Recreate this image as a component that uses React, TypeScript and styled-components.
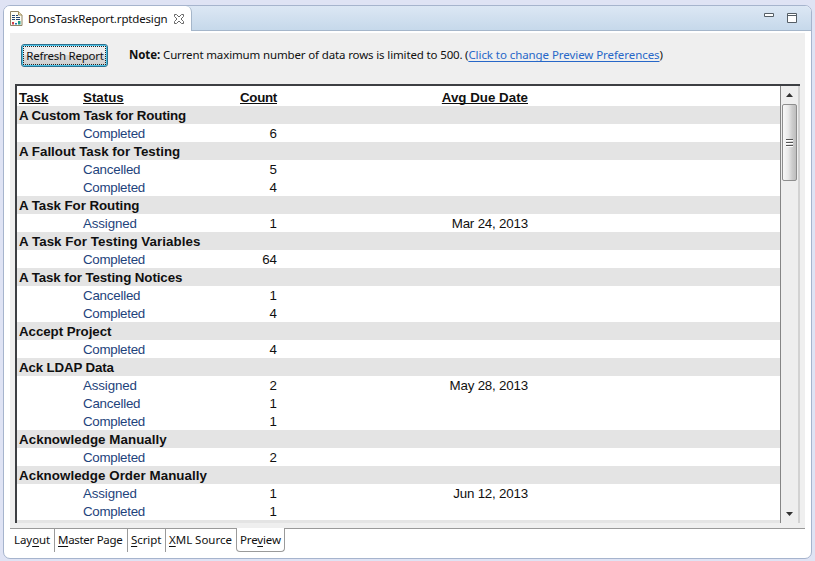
import React from "react";
import styled, { createGlobalStyle } from "styled-components";

const Global = createGlobalStyle`
  * { box-sizing: border-box; }
  html, body { margin: 0; height: 561px; overflow: hidden; background: #dfe3f4; }
`;

const Desktop = styled.div`
  width: 815px;
  height: 561px;
  padding: 5px 3px 2px;
  background: #dfe3f4;
  font-family: "Noto Sans", "Open Sans", sans-serif;
  font-size: 11.5px;
  color: #101010;
`;

const EditorWindow = styled.div`
  width: 809px;
  height: 554px;
  display: flex;
  flex-direction: column;
  border: 1px solid #a6b4cd;
  border-radius: 7px;
  background: #fff;
  overflow: hidden;
`;

const TitleBar = styled.header`
  height: 25px;
  flex: none;
  display: flex;
  justify-content: space-between;
  background: linear-gradient(#dce7f4, #c5d8ea);
  box-shadow: inset 0 -1px #a5b6ca;
`;

const FileTab = styled.div`
  width: 188px;
  display: flex;
  align-items: center;
  padding-left: 6px;
  background: #fff;
  border-right: 1px solid #a5b6ca;
  border-top-right-radius: 6px;
  svg { flex: none; }
`;

const Text = styled.span<{ $width: number; $spacing?: number }>`
  flex: none;
  width: ${(p) => p.$width}px;
  letter-spacing: ${(p) => p.$spacing ?? 0}px;
  white-space: nowrap;
`;

const FileName = styled(Text)`
  margin: 0 6px 0 5px;
`;

const WindowButtons = styled.div`
  display: flex;
  gap: 12px;
  padding: 7px 14px 0 0;
`;

const Page = styled.main`
  width: 795px;
  height: 495px;
  flex: none;
  margin: 2px 0 0 6px;
  background: #efefef;
`;

const Toolbar = styled.div`
  height: 51px;
  display: flex;
  align-items: flex-start;
  padding: 11px 0 0 11px;
`;

const RefreshButton = styled.button`
  width: 87px;
  height: 23px;
  flex: none;
  padding: 1px;
  border: 1px solid #2e718f;
  border-radius: 3px;
  background: linear-gradient(#eeeeee 48%, #dadada 50%, #cfcfcf);
  box-shadow: inset 0 0 0 1px #4cc4e8;
  font: inherit;
  color: #111;
`;

const FocusRing = styled.span`
  height: 19px;
  display: flex;
  align-items: center;
  padding-left: 2px;
  border: 1px dotted #222;
`;

const Message = styled.div`
  display: flex;
  height: 21px;
  align-items: center;
  margin-left: 21px;
`;

const NoteLabel = styled(Text)`
  font-weight: 700;
`;

const Link = styled.a`
  color: #2767c8;
  text-decoration: underline;
  text-underline-offset: 1.5px;
  text-decoration-skip-ink: none;
`;

const ReportFrame = styled.section`
  width: 785px;
  height: 439px;
  margin-left: 5px;
  display: flex;
  border-top: 2px solid #3d3f43;
  border-left: 2px solid #3d3f43;
  overflow: hidden;
`;

const Report = styled.div`
  width: 763px;
  height: 437px;
  flex: none;
  padding-top: 2px;
  overflow: hidden;
  background: #fff;
  font: 13.33px/18px "Liberation Sans", Arial, sans-serif;
`;

const Row = styled.div<{ $group?: boolean }>`
  height: 18px;
  display: grid;
  grid-template-columns: 66px 134px 60px 251px;
  white-space: nowrap;
  padding-top: 1px;
  background: ${(p) => (p.$group ? "#e4e4e4" : "#fff")};
`;

const HeaderRow = styled(Row)`
  font-weight: 700;
  text-decoration: underline;
  text-underline-offset: 1px;
  text-decoration-thickness: 1px;
  text-decoration-skip-ink: none;
`;

const GroupName = styled.strong<{ $spacing: number }>`
  grid-column: 1 / -1;
  padding-left: 2px;
  letter-spacing: ${(p) => p.$spacing}px;
`;

const Cell = styled.span<{ $right?: boolean; $spacing?: number }>`
  padding-left: ${(p) => (p.$right ? 0 : 2)}px;
  text-align: ${(p) => (p.$right ? "right" : "left")};
  letter-spacing: ${(p) => p.$spacing ?? 0}px;
`;

const Status = styled.span<{ $spacing: number }>`
  grid-column: 2;
  color: #1e437c;
  letter-spacing: ${(p) => p.$spacing}px;
`;

const ScrollBar = styled.div`
  width: 20px;
  height: 437px;
  display: flex;
  flex-direction: column;
  align-items: center;
  background: #eeeeee;
  border-left: 1px solid #858585;
  border-right: 2px solid #d2d2d2;
`;

const Arrow = styled.svg`
  width: 7px;
  height: 4px;
  flex: none;
  margin: 7px 0;
`;

const Thumb = styled.div`
  width: 15px;
  height: 77px;
  flex: none;
  display: flex;
  align-items: center;
  justify-content: center;
  border: 1px solid #8e8e8e;
  border-radius: 2px;
  background: linear-gradient(90deg, #f8f8f8, #e9e9e9 40%, #cdcdcd 70%, #bdbdbd);
`;

const Track = styled.div`
  flex: 1;
`;

const BottomTabs = styled.nav`
  height: 25px;
  flex: none;
  width: 795px;
  margin-left: 6px;
  display: flex;
  box-shadow: inset 0 1px #999;
`;

const BottomTab = styled.div<{ $width: number; $spacing: number; $active?: boolean }>`
  width: ${(p) => p.$width}px;
  height: 24px;
  padding-left: 3px;
  line-height: 24px;
  letter-spacing: ${(p) => p.$spacing}px;
  white-space: nowrap;
  border: solid #9a9a9a;
  border-width: ${(p) => (p.$active ? "0 1px 1px 1px" : "0 1px 0 0")};
  border-radius: ${(p) => (p.$active ? "0 0 4px 4px" : "0")};
  background: ${(p) => (p.$active ? "#fff" : "transparent")};
  u { text-underline-offset: 1.5px; text-decoration-skip-ink: none; }
  &:first-child { padding-left: 4px; }
  &:nth-last-child(2) { border-right: 0; }
`;

type Entry = [status: string, count: number, due?: string];

const groups: { name: string; spacing: number; entries: Entry[] }[] = [
  { name: "A Custom Task for Routing", spacing: -0.16, entries: [["Completed", 6]] },
  { name: "A Fallout Task for Testing", spacing: 0, entries: [["Cancelled", 5], ["Completed", 4]] },
  { name: "A Task For Routing", spacing: -0.06, entries: [["Assigned", 1, "Mar 24, 2013"]] },
  { name: "A Task For Testing Variables", spacing: 0.06, entries: [["Completed", 64]] },
  { name: "A Task for Testing Notices", spacing: -0.09, entries: [["Cancelled", 1], ["Completed", 4]] },
  { name: "Accept Project", spacing: -0.07, entries: [["Completed", 4]] },
  { name: "Ack LDAP Data", spacing: -0.15, entries: [["Assigned", 2, "May 28, 2013"], ["Cancelled", 1], ["Completed", 1]] },
  { name: "Acknowledge Manually", spacing: 0.06, entries: [["Completed", 2]] },
  { name: "Acknowledge Order Manually", spacing: 0.05, entries: [["Assigned", 1, "Jun 12, 2013"], ["Completed", 1]] },
];

const statusSpacing: Record<string, number> = { Completed: -0.28, Cancelled: -0.22, Assigned: -0.12 };

const ReportIcon = () => (
  <svg width="13" height="16" viewBox="0 0 13 16">
    <path d="M.5.5h8l3.5 3.5v10.5H.5z" fill="#fdfdf5" stroke="#8f8465" />
    <path d="M8.5.5v3.5H12" fill="#ece3bd" stroke="#a28f5b" />
    <path d="M2 4.5h3m1 0h2M2 6.5h3m1 0h4M2 8.5h3m1 0h4" stroke="#1f4373" strokeWidth="1.2" />
    <path d="M2 11h2v2.5H2z" fill="#d03c4c" />
    <path d="M5 12h2v1.5H5z" fill="#2474b4" />
    <path d="M8 10h2.5v3.5H8z" fill="#1f9c86" />
  </svg>
);

const CloseIcon = () => (
  <svg width="12" height="12" viewBox="0 0 12 12">
    <path d="M1.5 1.5h2L6 4l2.5-2.5h2v2L8 6l2.5 2.5v2h-2L6 8l-2.5 2.5h-2v-2L4 6 1.5 3.5z" fill="#fff" stroke="#686868" />
  </svg>
);

export default function App() {
  return (
    <>
      <Global />
      <Desktop>
        <EditorWindow>
          <TitleBar>
            <FileTab>
              <ReportIcon />
              <FileName $width={139} $spacing={-0.16}>DonsTaskReport.rptdesign</FileName>
              <CloseIcon />
            </FileTab>
            <WindowButtons>
              <svg width="11" height="11" viewBox="0 0 11 11">
                <path d="M.5.5h9v3h-9z" fill="#fff" stroke="#555e66" />
              </svg>
              <svg width="10" height="10" viewBox="0 0 10 10">
                <path d="M.5.5h9v9h-9zM.5 2.5h9" fill="#fff" stroke="#555e66" />
              </svg>
            </WindowButtons>
          </TitleBar>
          <Page>
            <Toolbar>
              <RefreshButton>
                <FocusRing><Text $width={78} $spacing={-0.25}>Refresh Report</Text></FocusRing>
              </RefreshButton>
              <Message>
                <NoteLabel $width={34} $spacing={-0.1}>Note:</NoteLabel>
                <Text $width={302} $spacing={-0.14}>Current maximum number of data rows is limited to 500.</Text>
                <Text $width={200} $spacing={-0.07}>(<Link>Click to change Preview Preferences</Link>)</Text>
              </Message>
            </Toolbar>
            <ReportFrame>
              <Report>
                <HeaderRow>
                  <Cell>Task</Cell>
                  <span>Status</span>
                  <Cell $right $spacing={-0.3}>Count</Cell>
                  <Cell $right>Avg Due Date</Cell>
                </HeaderRow>
                {groups.map((group) => (
                  <React.Fragment key={group.name}>
                    <Row $group><GroupName $spacing={group.spacing}>{group.name}</GroupName></Row>
                    {group.entries.map(([status, count, due]) => (
                      <Row key={status}>
                        <Status $spacing={statusSpacing[status]}>{status}</Status>
                        <Cell $right>{count}</Cell>
                        <Cell $right $spacing={-0.19}>{due}</Cell>
                      </Row>
                    ))}
                  </React.Fragment>
                ))}
                <Row $group />
              </Report>
              <ScrollBar>
                <Arrow viewBox="0 0 7 4"><path d="M3.5 0L7 4H0z" fill="#303030" /></Arrow>
                <Thumb>
                  <svg width="8" height="8" viewBox="0 0 8 8">
                    <path d="M0 .5h7M0 3.5h7M0 6.5h7" stroke="#555" />
                    <path d="M0 1.5h7M0 4.5h7M0 7.5h7" stroke="#fff" />
                  </svg>
                </Thumb>
                <Track />
                <Arrow viewBox="0 0 7 4"><path d="M0 0h7L3.5 4z" fill="#303030" /></Arrow>
              </ScrollBar>
            </ReportFrame>
          </Page>
          <BottomTabs>
            <BottomTab $width={45} $spacing={-0.07}>Lay<u>o</u>ut</BottomTab>
            <BottomTab $width={73} $spacing={-0.3}><u>M</u>aster Page</BottomTab>
            <BottomTab $width={38} $spacing={-0.1}><u>S</u>cript</BottomTab>
            <BottomTab $width={70} $spacing={-0.02}><u>X</u>ML Source</BottomTab>
            <BottomTab $width={49} $spacing={-0.15} $active>Pre<u>v</u>iew</BottomTab>
          </BottomTabs>
        </EditorWindow>
      </Desktop>
    </>
  );
}
